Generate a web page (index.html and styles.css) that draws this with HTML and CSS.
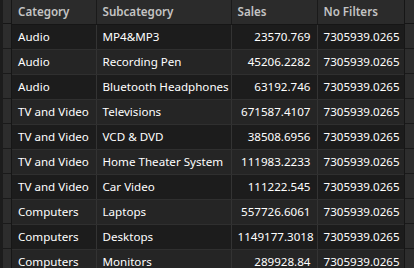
FILE: index.html
```html
<!DOCTYPE html>
<html>
<head>
<meta charset="utf-8">
<link rel="stylesheet" href="styles.css">
</head>
<body>
<div class="grid">
  <div class="gutter"><div class="gh"></div><div class="gr"></div><div class="gr"></div><div class="gr"></div><div class="gr"></div><div class="gr"></div><div class="gr"></div><div class="gr"></div><div class="gr"></div><div class="gr"></div><div class="gr"></div></div>
  <table class="tbl">
    <thead>
      <tr><th class="c1">Category</th><th class="c2">Subcategory</th><th class="c3">Sales</th><th class="c4">No Filters</th></tr>
    </thead>
    <tbody>
      <tr><td>Audio</td><td>MP4&amp;MP3</td><td class="num">23570.769</td><td>7305939.0265</td></tr>
      <tr><td>Audio</td><td>Recording Pen</td><td class="num">45206.2282</td><td>7305939.0265</td></tr>
      <tr><td>Audio</td><td>Bluetooth Headphones</td><td class="num">63192.746</td><td>7305939.0265</td></tr>
      <tr><td>TV and Video</td><td>Televisions</td><td class="num">671587.4107</td><td>7305939.0265</td></tr>
      <tr><td>TV and Video</td><td>VCD &amp; DVD</td><td class="num">38508.6956</td><td>7305939.0265</td></tr>
      <tr><td>TV and Video</td><td>Home Theater System</td><td class="num">111983.2233</td><td>7305939.0265</td></tr>
      <tr><td>TV and Video</td><td>Car Video</td><td class="num">111222.545</td><td>7305939.0265</td></tr>
      <tr><td>Computers</td><td>Laptops</td><td class="num">557726.6061</td><td>7305939.0265</td></tr>
      <tr><td>Computers</td><td>Desktops</td><td class="num">1149177.3018</td><td>7305939.0265</td></tr>
      <tr><td>Computers</td><td>Monitors</td><td class="num">289928.84</td><td>7305939.0265</td></tr>
    </tbody>
  </table>
  <div class="gutter right"><div class="gh"></div><div class="gr"></div><div class="gr"></div><div class="gr"></div><div class="gr"></div><div class="gr"></div><div class="gr"></div><div class="gr"></div><div class="gr"></div><div class="gr"></div><div class="gr"></div></div>
</div>
</body>
</html>
```
FILE: styles.css
```css
html, body {
  margin: 0;
  padding: 0;
  background: #1e1e1e;
  overflow: hidden;
}
.grid {
  display: flex;
  width: 414px;
  height: 268px;
  overflow: hidden;
  font-family: "Segoe UI", "Noto Sans", "Open Sans", sans-serif;
  font-size: 11.6px;
  color: #ffffff;
}
.gutter {
  width: 12px;
  flex: none;
  background: #2d2d2d;
  border-left: 3px solid #1c1c1c;
  border-right: 1px solid #161616;
  box-sizing: border-box;
}
.gutter.right {
  width: 10px;
  border-left: 1px solid #161616;
  border-right: none;
}
.gh {
  height: 24px;
  border-bottom: 1px solid #161616;
  box-sizing: border-box;
}
.gr {
  height: 25px;
  border-bottom: 1px solid #1a1a1a;
  box-sizing: border-box;
}
.tbl {
  border-collapse: collapse;
  table-layout: fixed;
  width: 392px;
  flex: none;
}
.c1 { width: 84px; }
.c2 { width: 135px; }
.c3 { width: 86px; }
.c4 { width: 87px; }
th {
  height: 24px;
  box-sizing: border-box;
  background: #2b2b2b;
  color: #c4c4c4;
  font-weight: 600;
  text-align: left;
  padding: 0 6px;
  border-right: 1px solid #1a1a1a;
  border-bottom: 1px solid #161616;
  white-space: nowrap;
}
td {
  height: 25px;
  box-sizing: border-box;
  padding: 0 6px;
  border-right: 1px solid #333333;
  border-bottom: 1px solid #2f2f2f;
  white-space: nowrap;
  overflow: hidden;
}
tbody tr:nth-child(odd) td { background: #1c1c1c; }
tbody tr:nth-child(even) td { background: #252525; }
td.num { text-align: right; }
td:last-child, th:last-child { border-right: none; }
```
